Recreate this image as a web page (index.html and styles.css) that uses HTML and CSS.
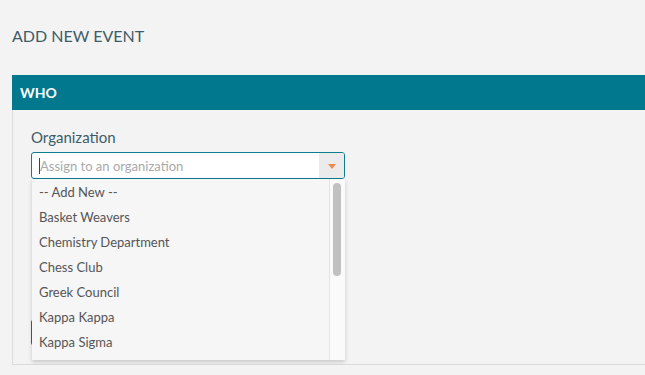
FILE: index.html
```html
<!DOCTYPE html>
<html lang="en">
<head>
  <meta charset="UTF-8" />
  <meta name="viewport" content="width=device-width, initial-scale=1" />
  <title>Add New Event</title>
  <link rel="stylesheet" href="styles.css">
</head>
<body>
  <div class="page">
    <h1 class="page-title">ADD NEW EVENT</h1>

    <section class="section">
      <div class="section-bar">WHO</div>
      <div class="section-body">
        <div class="field">
          <label class="field-label">Organization</label>
          <div class="combo">
            <div class="combo-input">
              <span class="caret"></span>
              <span class="placeholder">Assign to an organization</span>
            </div>
            <div class="combo-arrow"><span class="triangle"></span></div>

            <!-- Open dropdown list -->
            <div class="dropdown">
              <ul class="dropdown-list">
                <li>-- Add New --</li>
                <li>Basket Weavers</li>
                <li>Chemistry Department</li>
                <li>Chess Club</li>
                <li>Greek Council</li>
                <li>Kappa Kappa</li>
                <li>Kappa Sigma</li>
              </ul>
              <div class="scroll-track"><div class="scroll-thumb"></div></div>
            </div>
          </div>
        </div>

        <!-- button sits under the open list -->
        <button class="btn" type="button" aria-label="Next"></button>
      </div>
    </section>
  </div>
</body>
</html>
```

FILE: styles.css
```css
/* Reset and base */
* {
  box-sizing: border-box;
}
html, body {
  margin: 0;
  overflow: hidden;
}
body {
  font-family: Lato, 'Open Sans', sans-serif;
  background: #f3f3f3;
  color: #3e5c68;
}

.page {
  width: 645px;
  padding: 0 0 0 12px;
}

.page-title {
  margin: 0;
  padding-top: 26px;
  height: 75px;
  font-size: 16px;
  font-weight: 400;
  line-height: 19px;
  color: #3e5c68;
}

/* Section */
.section-bar {
  height: 35px;
  background: #02788f;
  color: #fff;
  font-size: 14px;
  font-weight: 700;
  line-height: 35px;
  padding-left: 8px;
}
.section-body {
  border-left: 1px solid #dcdcdc;
  border-bottom: 1px solid #dcdcdc;
  padding: 18px 0 19px 18px;
}

.field-label {
  display: block;
  font-size: 15px;
  line-height: 18px;
  margin-bottom: 6px;
  color: #3e5c68;
}

/* Combobox */
.combo {
  position: relative;
  width: 314px;
  height: 27px;
  display: flex;
  border: 1px solid #0d7b91;
  border-radius: 3px;
  background: #fff;
}
.combo-input {
  flex: 1;
  display: flex;
  align-items: center;
  padding-left: 7px;
}
.caret {
  display: inline-block;
  width: 1px;
  height: 16px;
  background: #2b4955;
}
.placeholder {
  font-size: 13px;
  color: #a9a9a9;
}
.combo-arrow {
  width: 25px;
  background: #ebebeb;
  border-radius: 0 2px 2px 0;
  display: flex;
  align-items: center;
  justify-content: center;
}
.triangle {
  width: 0;
  height: 0;
  border-left: 4px solid transparent;
  border-right: 4px solid transparent;
  border-top: 5px solid #f08a52;
  margin-top: 1px;
}

/* Dropdown */
.dropdown {
  position: absolute;
  top: 26px;
  left: 0;
  width: 313px;
  height: 181px;
  display: flex;
  background: #f6f6f6;
  box-shadow: 0 2px 4px rgba(0,0,0,0.18);
  z-index: 10;
  overflow: hidden;
}
.dropdown-list {
  list-style: none;
  margin: 0;
  padding: 1px 0 0;
  flex: 1;
}
.dropdown-list li {
  height: 25px;
  line-height: 25px;
  padding-left: 7px;
  font-size: 13px;
  color: #555;
}
.scroll-track {
  width: 16px;
  border-left: 1px solid #e4e4e4;
  background: #fafafa;
  padding: 4px 0 0 3px;
}
.scroll-thumb {
  width: 8px;
  height: 93px;
  border-radius: 4px;
  background: #c1c1c1;
}

.btn {
  display: block;
  margin-top: 141px;
  width: 80px;
  height: 25px;
  border: none;
  border-radius: 2px;
  background: #02788f;
}
```
